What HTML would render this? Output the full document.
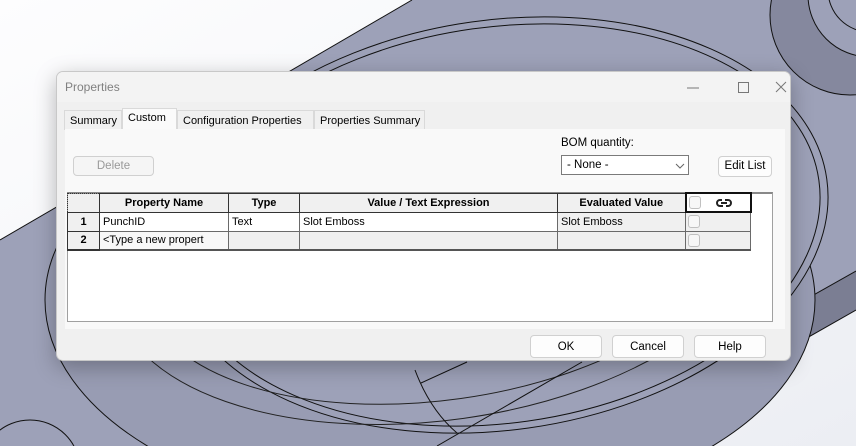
<!DOCTYPE html>
<html style="overflow:hidden"><head><meta charset="utf-8"><style>
*{margin:0;padding:0;box-sizing:border-box}
html,body{width:856px;height:446px;overflow:hidden}
body{position:relative;font-family:"Liberation Sans",sans-serif;font-size:11.5px;color:#000;background:#f4f5f8}
svg.bg{position:absolute;left:0;top:0}
.dlg{position:absolute;left:56px;top:71px;width:735px;height:290px;background:#f0f0f0;border:1px solid #c8c8c8;border-radius:7px;box-shadow:0 6px 22px rgba(0,0,0,.28);overflow:hidden}
.title{position:absolute;left:0;top:0;width:100%;height:30px;background:#f3f3f3}
.title span{position:absolute;left:8px;top:8px;color:#808080;font-size:12px}
.ab{position:absolute;white-space:nowrap}
.tab{position:absolute;top:38px;height:20px;border:1px solid #d9d9d9;border-bottom:none;background:#f0f0f0;padding:4px 0 0 5px;font-size:11px;white-space:nowrap;overflow:hidden}
.tab.sel{top:36px;height:22px;background:#fafafa;padding-top:3px}
.content{position:absolute;left:8px;top:57px;width:720px;height:200px;background:#f9f9f9}
.btn{position:absolute;border:1px solid #d0d0d0;border-radius:4px;background:#fdfdfd;text-align:center;font-size:11.5px}
table{position:absolute;border-collapse:collapse;font-size:11px;table-layout:fixed}
td,th{height:19px;line-height:16px;padding:0 3px;white-space:nowrap;overflow:hidden}
td{border:1px solid #6a6a6a}
th{border:1px solid #333;font-weight:bold;background:#f0f0f0;text-align:center}
.cb{display:inline-block;width:12px;height:13px;border:1px solid #c0c0c0;border-radius:3px;background:#f7f7f7;vertical-align:middle}
</style></head><body>
<svg class="bg" width="856" height="446" viewBox="0 0 856 446">
<defs><linearGradient id="w" x1="0" y1="0" x2="1" y2="1"><stop offset="0" stop-color="#fdfdfe"/><stop offset="1" stop-color="#eceef3"/></linearGradient></defs>
<rect width="856" height="446" fill="url(#w)"/>
<polygon points="412,0 856,0 856,271 546,446 0,446 0,240" fill="#9da1b8"/>
<polygon points="856,271 856,310 617,446 546,446" fill="#7b7e93"/>
<line x1="412" y1="0" x2="0" y2="240" stroke="#111"/>
<line x1="856" y1="271" x2="546" y2="446" stroke="#111"/>
<line x1="856" y1="310" x2="617" y2="446" stroke="#111"/>
<ellipse cx="430" cy="300" rx="385" ry="215" fill="#989cb3" stroke="#111"/>
<ellipse cx="500" cy="225" rx="330" ry="205" transform="rotate(-8 500 225)" fill="#9da1b8" stroke="#111"/>
<ellipse cx="500" cy="225" rx="322" ry="198" transform="rotate(-8 500 225)" fill="none" stroke="#111"/>
<ellipse cx="440" cy="250" rx="300" ry="150" transform="rotate(-8 440 250)" fill="none" stroke="#222"/>
<ellipse cx="440" cy="250" rx="330" ry="170" transform="rotate(-8 440 250)" fill="none" stroke="#222"/>
<line x1="467" y1="362" x2="421" y2="383" stroke="#111"/>
<line x1="582" y1="362" x2="437" y2="446" stroke="#111"/>
<path d="M415 370 Q430 410 457 433" fill="none" stroke="#111"/>
<circle cx="850" cy="15" r="80" fill="#85889e" stroke="#111"/>
<circle cx="870" cy="-5" r="62" fill="#9da1b8" stroke="#111"/>
<circle cx="870" cy="-10" r="42" fill="none" stroke="#111"/>
<circle cx="30" cy="470" r="50" fill="none" stroke="#111"/>
</svg>
<div class="dlg">
<div class="title"><span>Properties</span>
<svg class="ab" style="left:620px;top:6px" width="110" height="20"><line x1="10" y1="10" x2="22" y2="10" stroke="#777"/><rect x="61.5" y="4.5" width="10" height="10" fill="none" stroke="#777"/><path d="M99 4 L109 14 M109 4 L99 14" stroke="#777"/></svg>
</div>
<div class="tab" style="left:7px;width:58px">Summary</div>
<div class="tab sel" style="left:65px;width:55px">Custom</div>
<div class="tab" style="left:120px;width:137px">Configuration Properties</div>
<div class="tab" style="left:257px;width:111px">Properties Summary</div>
<div class="content"></div>
<div class="btn" style="left:16px;top:84px;width:81px;height:20px;color:#999;background:#f5f5f5;padding-top:3px">Delete</div>
<div class="ab" style="left:504px;top:65px">BOM quantity:</div>
<div class="ab" style="left:504px;top:83px;width:128px;height:20px;border:1px solid #7a7a7a;background:#fff;padding:3px 0 0 5px">- None -<svg class="ab" style="left:113px;top:6px" width="10" height="8"><path d="M1 2 L5 6 L9 2" fill="none" stroke="#666"/></svg></div>
<div class="btn" style="left:661px;top:84px;width:54px;height:21px;padding-top:3px">Edit List</div>
<div class="ab" style="left:10px;top:120px;width:706px;height:130px;background:#fff;border:1px solid #a0a0a0;border-top:2px solid #888"></div>
<table style="left:10px;top:120px;width:683px">
<colgroup><col style="width:32px"><col style="width:129px"><col style="width:71px"><col style="width:258px"><col style="width:128px"><col style="width:65px"></colgroup>
<tr><th style="border:1px dotted #333"></th><th>Property Name</th><th>Type</th><th>Value / Text Expression</th><th>Evaluated Value</th><th style="border:2px solid #111;text-align:left;padding-left:2px;background:#fff"><span class="cb"></span><svg style="margin-left:14px;vertical-align:middle" width="18" height="12"><path d="M7 3 H5 A3 3 0 0 0 5 9 H8 M11 9 H13 A3 3 0 0 0 13 3 H10 M6 6 H12" fill="none" stroke="#222" stroke-width="2"/></svg></th></tr>
<tr><td style="background:#f0f0f0;text-align:center;font-weight:bold;border-color:#333">1</td><td>PunchID</td><td>Text</td><td>Slot Emboss</td><td style="background:#f0f0f0">Slot Emboss</td><td style="background:#f0f0f0;padding-left:2px"><span class="cb"></span></td></tr>
<tr><td style="background:#f0f0f0;text-align:center;font-weight:bold;border-color:#333;border-bottom:2px solid #333">2</td><td style="background:#f8f8f8;border-bottom:2px solid #555">&lt;Type a new propert</td><td style="background:#f0f0f0;border-bottom:2px solid #555"></td><td style="background:#f0f0f0;border-bottom:2px solid #555"></td><td style="background:#f0f0f0;border-bottom:2px solid #555"></td><td style="background:#f0f0f0;padding-left:2px;border-bottom:2px solid #555"><span class="cb"></span></td></tr>
</table>
<div class="btn" style="left:473px;top:263px;width:72px;height:23px;padding-top:5px">OK</div>
<div class="btn" style="left:555px;top:263px;width:72px;height:23px;padding-top:5px">Cancel</div>
<div class="btn" style="left:637px;top:263px;width:72px;height:23px;padding-top:5px">Help</div>
</div>
</body></html>
